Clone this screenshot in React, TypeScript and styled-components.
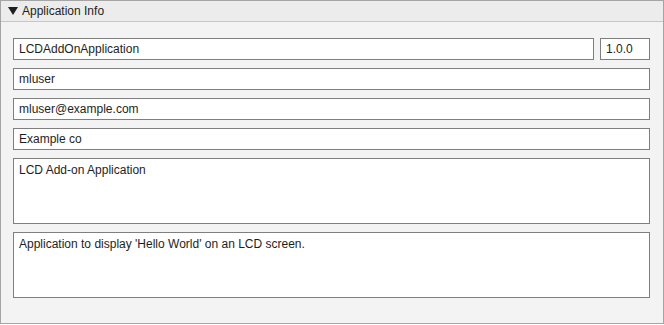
import styled, { createGlobalStyle } from 'styled-components';

const GlobalStyle = createGlobalStyle`
  html, body {
    margin: 0;
    padding: 0;
    background: #ffffff;
  }
  body {
    font-family: 'Liberation Sans', Arial, sans-serif;
  }
`;

const Panel = styled.div`
  width: 664px;
  height: 324px;
  box-sizing: border-box;
  border: 1px solid #a5a5a5;
  background: #f3f3f3;
  display: flex;
  flex-direction: column;
`;

const Header = styled.div`
  height: 21px;
  box-sizing: border-box;
  border-bottom: 1px solid #c6c6c6;
  background: #ececec;
  display: flex;
  align-items: center;
  padding-left: 7px;
  gap: 4px;
  font-size: 12px;
  color: #1e1e1e;
`;

const Caret = styled.svg`
  width: 10px;
  height: 8px;
  flex: 0 0 auto;
`;

const Body = styled.div`
  display: flex;
  flex-direction: column;
  gap: 8px;
  padding: 16px 13px 0 12px;
`;

const Row = styled.div`
  display: flex;
  gap: 6px;
`;

const Field = styled.div<{ $width?: number }>`
  box-sizing: border-box;
  height: 22px;
  border: 1px solid #7f7f7f;
  background: #ffffff;
  display: flex;
  align-items: center;
  padding-left: 5px;
  font-size: 12px;
  color: #1e1e1e;
  flex: ${(p) => (p.$width ? `0 0 ${p.$width}px` : '1 1 auto')};
`;

const Area = styled.div`
  box-sizing: border-box;
  height: 66px;
  border: 1px solid #7f7f7f;
  background: #ffffff;
  padding: 4px 5px;
  font-size: 12px;
  line-height: 14px;
  color: #1e1e1e;
`;

export default function App() {
  return (
    <>
      <GlobalStyle />
      <Panel>
        <Header>
          <Caret viewBox="0 0 10 8">
            <polygon points="0,0 10,0 5,8" fill="#1e1e1e" />
          </Caret>
          <span>Application Info</span>
        </Header>
        <Body>
          <Row>
            <Field>LCDAddOnApplication</Field>
            <Field $width={50}>1.0.0</Field>
          </Row>
          <Field>mluser</Field>
          <Field>mluser@example.com</Field>
          <Field>Example co</Field>
          <Area>LCD Add-on Application</Area>
          <Area>Application to display 'Hello World' on an LCD screen.</Area>
        </Body>
      </Panel>
    </>
  );
}
